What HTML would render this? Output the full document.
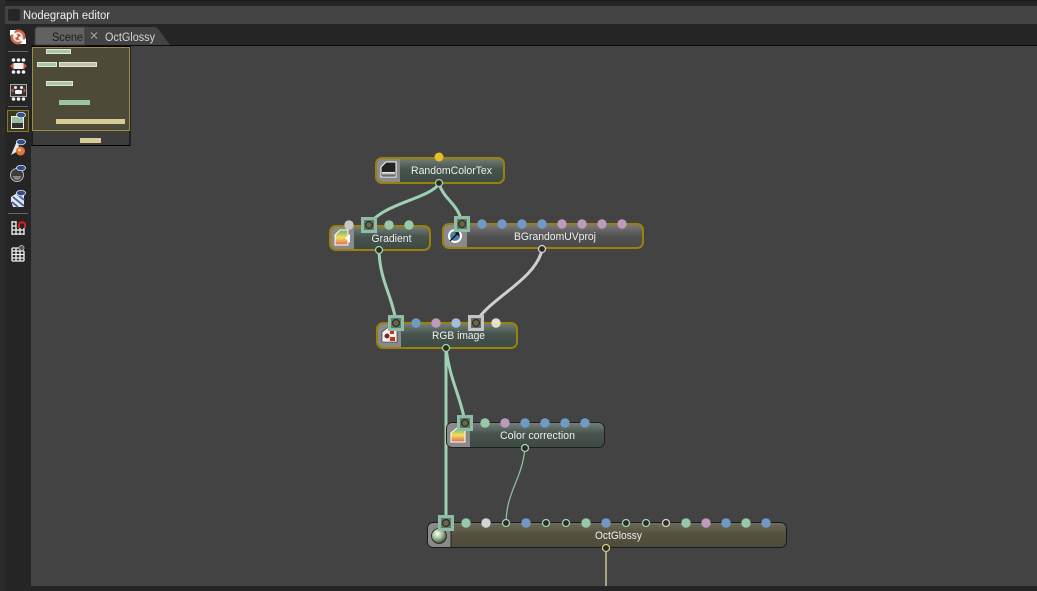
<!DOCTYPE html>
<html><head><meta charset="utf-8"><style>
html,body{margin:0;padding:0;background:#252525;width:1037px;height:591px;overflow:hidden}
svg{display:block}
text{font-family:"Liberation Sans",sans-serif;font-size:11px;fill:#eeeeee}
.t{text-anchor:middle}
</style></head><body>
<svg width="1037" height="591" viewBox="0 0 1037 591" xmlns="http://www.w3.org/2000/svg">
<defs>
<linearGradient id="g" x1="0" y1="0" x2="0" y2="1"><stop offset="0" stop-color="#75807a"/><stop offset=".45" stop-color="#47534d"/><stop offset="1" stop-color="#3d4a44"/></linearGradient>
<linearGradient id="n" x1="0" y1="0" x2="0" y2="1"><stop offset="0" stop-color="#7a7a7a"/><stop offset=".5" stop-color="#525252"/><stop offset="1" stop-color="#484848"/></linearGradient>
<linearGradient id="o" x1="0" y1="0" x2="0" y2="1"><stop offset="0" stop-color="#6e6c5c"/><stop offset=".45" stop-color="#54513f"/><stop offset="1" stop-color="#4e4b3b"/></linearGradient>
<linearGradient id="ic" x1="0" y1="0" x2="0" y2="1"><stop offset="0" stop-color="#fff"/><stop offset="1" stop-color="#555"/></linearGradient>
<linearGradient id="rb" x1="0" y1="0" x2="0" y2="1"><stop offset="0" stop-color="#6fae6a"/><stop offset=".5" stop-color="#f0e060"/><stop offset="1" stop-color="#e06a50"/></linearGradient>
<radialGradient id="sp" cx=".4" cy=".35" r=".7"><stop offset="0" stop-color="#fff"/><stop offset=".5" stop-color="#9dbb90"/><stop offset="1" stop-color="#2a3a2a"/></radialGradient>
</defs>

<!-- chrome -->
<rect width="1037" height="591" fill="#252525"/>
<rect x="0" y="0" width="1037" height="1" fill="#1a1a1a"/>
<rect x="5" y="6" width="1032" height="18" fill="#434343"/>
<rect x="0" y="0" width="5" height="591" fill="#2c2c2c"/>
<rect x="8" y="9" width="12" height="12" rx="2" fill="#262626"/>
<text x="23" y="19" textLength="87" lengthAdjust="spacingAndGlyphs" style="font-size:11.500px">Nodegraph editor</text>
<rect x="31" y="45" width="1006" height="1" fill="#0c0c0c"/>
<rect x="31" y="46" width="1006" height="540" fill="#434343"/>

<!-- tabs -->
<path d="M85 45V27H154Q157 27 159 30L170 45Z" fill="#434343"/>
<path d="M35 45V30Q35 27 38 27H85V45Z" fill="#626262" stroke="#3a3a3a"/>
<text x="52" y="41" textLength="31" lengthAdjust="spacingAndGlyphs" style="fill:#1c1c1c;font-size:11.500px">Scene</text>
<path d="M91 32.500L97 38.500M97 32.500L91 38.500" stroke="#a8a8a8" stroke-width="1"/>
<text x="105" y="41" textLength="50" lengthAdjust="spacingAndGlyphs" style="fill:#d5d5d5;font-size:11.500px">OctGlossy</text>

<!-- minimap -->
<rect x="32" y="46.500" width="98" height="99" fill="#3d3d3d" stroke="#000"/>
<rect x="32.500" y="47.500" width="97" height="83" fill="#4e4a3a" stroke="#9c8c48"/>
<g stroke="#e6e3d0" stroke-width="1">
<rect x="46.500" y="49.500" width="24" height="4" fill="#a4c8ac"/>
<rect x="37.500" y="62.500" width="19" height="4" fill="#a4c8ac"/>
<rect x="59.500" y="62.500" width="37" height="4" fill="#c4bfae"/>
<rect x="46.500" y="81.500" width="26" height="4" fill="#a4c8ac"/>
</g>
<rect x="59" y="100" width="31" height="5" fill="#9cc4a4"/>
<rect x="56" y="119" width="69" height="5" fill="#d8cd96"/>
<rect x="80" y="138" width="21" height="5" fill="#d8cd96"/>

<!-- sidebar -->
<g>
<circle cx="18" cy="37" r="7.500" fill="#c96a45"/><circle cx="18" cy="37" r="5" fill="#e8d8d0"/><circle cx="18" cy="37" r="3" fill="#c94a35"/>
<path d="M10 30l6 0-2 2 4 4-2 2-4-4-2 2zM26 44l-6 0 2-2-4-4 2-2 4 4 2-2z" fill="#fff"/>
<rect x="8" y="51" width="20" height="1" fill="#666"/>
<g fill="#f2f2f2"><circle cx="13.500" cy="60" r="1.800"/><circle cx="18.500" cy="60" r="1.800"/><circle cx="23.500" cy="60" r="1.800"/><circle cx="13.500" cy="72" r="1.800"/><circle cx="18.500" cy="72" r="1.800"/><circle cx="23.500" cy="72" r="1.800"/><rect x="13" y="63" width="11" height="6" rx="2"/></g>
<path d="M10 66l3.500-3.500v7zM27 66l-3.500-3.500v7z" fill="#d6503a"/>
<rect x="8" y="106" width="20" height="1" fill="#666"/>
<rect x="10.500" y="84.500" width="16" height="12" fill="#333" stroke="#aaa"/>
<g fill="#f2f2f2"><circle cx="15.500" cy="87.500" r="1.500"/><circle cx="21.500" cy="87.500" r="1.500"/><rect x="15" y="90" width="7" height="4" rx="1"/><circle cx="13.500" cy="99" r="1.800"/><circle cx="18.500" cy="99" r="1.800"/><circle cx="23.500" cy="99" r="1.800"/></g>
<path d="M11 90.500l2.500-2.500v5zM26 90.500l-2.500-2.500v5z" fill="#d6503a"/>
<rect x="7.500" y="110.500" width="21" height="21" fill="#3a3620" stroke="#8c7a20"/>
<rect x="11" y="116" width="13" height="13" fill="#eee"/><rect x="12" y="117" width="11" height="6" fill="#9cc0a0"/><rect x="12" y="123" width="11" height="5" fill="#333"/>
<ellipse cx="21" cy="115" rx="4.500" ry="2.800" fill="#2e4f8c" stroke="#fff" stroke-width=".7"/>
<path d="M11 155L17 141L20 150Z" fill="#dfe8ee"/><circle cx="20.500" cy="151" r="4.500" fill="#e8733a"/><circle cx="19.500" cy="150" r="1.500" fill="#ffd0a0"/>
<ellipse cx="21" cy="142" rx="4.500" ry="2.800" fill="#2e4f8c" stroke="#fff" stroke-width=".7"/>
<circle cx="17" cy="175" r="6.500" fill="#3c3c3c" stroke="#bbb"/><path d="M13 176a4 4 0 0 0 8 0z" fill="#888"/>
<ellipse cx="21" cy="168" rx="4.500" ry="2.800" fill="#2e4f8c" stroke="#fff" stroke-width=".7"/>
<path d="M11 201V197L17 193H24V207H13Z" fill="#e8e8e8"/><path d="M13 197L24 206M12 202L18 207M17 194L24 200" stroke="#4469b0" stroke-width="2"/>
<ellipse cx="21" cy="193" rx="4.500" ry="2.800" fill="#2e4f8c" stroke="#fff" stroke-width=".7"/>
<rect x="8" y="213" width="20" height="1" fill="#666"/>
<path d="M12 221V235M16 221V235M20 228V235M24 228V235M12 222H16M12 226H16M12 230H24M12 234H24" stroke="#f2f2f2" stroke-width="1.300" fill="none"/>
<path d="M19 228v-4a3.500 3.500 0 0 1 6 0v4" stroke="#d02020" stroke-width="2" fill="none"/>
<path d="M12 248V261M16 248V261M20 248V261M24 251V261M12 248H21M12 251H24M12 254.500H24M12 258H24M12 261H24" stroke="#f2f2f2" stroke-width="1.300" fill="none"/>
<circle cx="21.500" cy="248" r="2.500" fill="#555" stroke="#aaa"/>
</g>

<!-- wires -->
<g fill="none" stroke="#9ed0b4" stroke-width="3" stroke-linecap="round">
<path d="M439 184C428 199 385 203 369 224"/>
<path d="M439 184C445 201 459 204 462 224"/>
<path d="M379 251C380 281 392 295 396 322"/>
<path d="M446 349V522" />
<path d="M446 349C450 380 460 395 465 422"/>
</g>
<path d="M542 250C535 280 490 298 476 322" fill="none" stroke="#cfcfcf" stroke-width="3"/>
<path d="M525 448C522 480 507 490 506 522" fill="none" stroke="#8ac0a4" stroke-width="1.300"/>
<path d="M606 549V586" stroke="#cfc592" stroke-width="1.500"/>

<!-- RandomColorTex -->
<rect x="376" y="158" width="128" height="25" rx="6" fill="url(#g)" stroke="#9c800c" stroke-width="2"/>
<path d="M377 164a5 5 0 0 1 5-5H400V182H382a5 5 0 0 1-5-5Z" fill="#8a8a8a"/>
<path d="M381 177V167L386 162H396V177Z" fill="#222" stroke="#fff" stroke-width="1"/>
<path d="M382 172H395V176H382Z" fill="url(#ic)"/>
<circle cx="439" cy="157" r="4.500" fill="#e8bd28"/>
<text class="t" x="451.500" y="174" textLength="81" lengthAdjust="spacingAndGlyphs">RandomColorTex</text>

<!-- Gradient -->
<rect x="330" y="226" width="100" height="24" rx="6" fill="url(#g)" stroke="#9c800c" stroke-width="2"/>
<path d="M331 232a5 5 0 0 1 5-5H354V249H336a5 5 0 0 1-5-5Z" fill="#8a8a8a"/>
<path d="M335 245V235L340 230H348V245Z" fill="url(#rb)" stroke="#fff" stroke-width="1"/>
<path d="M345 238L350 234V243Z" fill="#fff"/>
<text class="t" x="391.500" y="242" textLength="40" lengthAdjust="spacingAndGlyphs">Gradient</text>

<!-- BGrandomUVproj -->
<rect x="443" y="224" width="200" height="24" rx="6" fill="url(#n)" stroke="#9c800c" stroke-width="2"/>
<path d="M444 230a5 5 0 0 1 5-5H467V247H449a5 5 0 0 1-5-5Z" fill="#8a8a8a"/>
<circle cx="455" cy="236" r="7" fill="#fff"/><circle cx="455" cy="236" r="5" fill="#4a7ea8"/><path d="M450 241L458 233M455.500 233h3v3" stroke="#111" stroke-width="1.400" fill="none"/>
<text class="t" x="555" y="240" textLength="82" lengthAdjust="spacingAndGlyphs">BGrandomUVproj</text>

<!-- RGB image -->
<rect x="377" y="323" width="140" height="25" rx="6" fill="url(#g)" stroke="#9c800c" stroke-width="2"/>
<path d="M378 329a5 5 0 0 1 5-5H401V347H383a5 5 0 0 1-5-5Z" fill="#8a8a8a"/>
<path d="M382 342V332L387 328H397V342Z" fill="#f2f2f2" stroke="#222" stroke-width=".6"/>
<circle cx="387" cy="336" r="2.500" fill="#7a2a18"/><rect x="390" y="331" width="4" height="3" fill="#c83018"/><rect x="390" y="337" width="5" height="4" fill="#c83018"/>
<text class="t" x="458.500" y="339" textLength="53" lengthAdjust="spacingAndGlyphs">RGB image</text>

<!-- Color correction -->
<rect x="446.500" y="422.500" width="158" height="25" rx="6" fill="url(#g)" stroke="#1f1f1f" stroke-width="1"/>
<path d="M447 428a5 5 0 0 1 5-5H470V447H452a5 5 0 0 1-5-5Z" fill="#8a8a8a"/>
<path d="M451 442V433L457 428H465V442Z" fill="url(#rb)" stroke="#fff" stroke-width="1"/>
<text class="t" x="537.500" y="439" textLength="75" lengthAdjust="spacingAndGlyphs">Color correction</text>

<!-- OctGlossy -->
<rect x="427.500" y="522.500" width="359" height="25" rx="6" fill="url(#o)" stroke="#1a1a1a" stroke-width="1"/>
<path d="M428 528a5 5 0 0 1 5-5H451V547H433a5 5 0 0 1-5-5Z" fill="#8a8a8a"/>
<path d="M451 523V547" stroke="#222"/>
<circle cx="439" cy="536" r="7.500" fill="url(#sp)" stroke="#222" stroke-width=".8"/>
<text class="t" x="618.500" y="539" textLength="47" lengthAdjust="spacingAndGlyphs">OctGlossy</text>

<!-- dots -->
<g fill="#c6c6c6"><circle cx="349" cy="225" r="4.700"/></g>
<g fill="#97c8a9"><circle cx="389" cy="225" r="4.700"/><circle cx="409" cy="225" r="4.700"/><circle cx="485" cy="423" r="4.700"/><circle cx="466" cy="523" r="4.700"/><circle cx="586" cy="523" r="4.700"/><circle cx="686" cy="523" r="4.700"/><circle cx="746" cy="523" r="4.700"/></g>
<g fill="#6f9ac6"><circle cx="482" cy="224" r="4.700"/><circle cx="502" cy="224" r="4.700"/><circle cx="522" cy="224" r="4.700"/><circle cx="542" cy="224" r="4.700"/><circle cx="416" cy="323" r="4.700"/><circle cx="525" cy="423" r="4.700"/><circle cx="545" cy="423" r="4.700"/><circle cx="565" cy="423" r="4.700"/><circle cx="585" cy="423" r="4.700"/><circle cx="526" cy="523" r="4.700"/><circle cx="606" cy="523" r="4.700"/><circle cx="726" cy="523" r="4.700"/><circle cx="766" cy="523" r="4.700"/></g>
<g fill="#c09abc"><circle cx="562" cy="224" r="4.700"/><circle cx="582" cy="224" r="4.700"/><circle cx="602" cy="224" r="4.700"/><circle cx="622" cy="224" r="4.700"/><circle cx="436" cy="323" r="4.700"/><circle cx="505" cy="423" r="4.700"/><circle cx="706" cy="523" r="4.700"/></g>
<circle cx="456" cy="323" r="4.700" fill="#a6bedc"/>
<circle cx="496" cy="323" r="4.700" fill="#e4e0cc"/>
<circle cx="486" cy="523" r="4.700" fill="#d6d6d6"/>

<!-- selection boxes -->
<g fill="#8fbca6">
<path fill-rule="evenodd" d="M361 217h16v16h-16zM364 220v10h10v-10z"/>
<path fill-rule="evenodd" d="M454 216h16v16h-16zM457 219v10h10v-10z"/>
<path fill-rule="evenodd" d="M388 315h16v16h-16zM391 318v10h10v-10z"/>
<path fill-rule="evenodd" d="M457 415h16v16h-16zM460 418v10h10v-10z"/>
<path fill-rule="evenodd" d="M438 515h16v16h-16zM441 518v10h10v-10z"/>
</g>
<path fill-rule="evenodd" d="M468 315h16v16h-16zM471 318v10h10v-10z" fill="#c4c4c4"/>
<g fill="#5f7a6c"><rect x="364" y="220" width="10" height="10"/><rect x="457" y="219" width="10" height="10"/><rect x="391" y="318" width="10" height="10"/><rect x="460" y="418" width="10" height="10"/><rect x="441" y="518" width="10" height="10"/></g>
<rect x="471" y="318" width="10" height="10" fill="#6a6a6a"/>

<!-- rings in boxes -->
<g fill="#6b6540" stroke="#2e2e2e" stroke-width="1.300">
<circle cx="369" cy="225" r="3.500"/><circle cx="462" cy="224" r="3.500"/><circle cx="396" cy="323" r="3.500"/><circle cx="465" cy="423" r="3.500"/><circle cx="446" cy="523" r="3.500"/><circle cx="476" cy="323" r="3.500"/>
</g>
<!-- rings -->
<g fill="#2e2a1c" stroke="#9ed0b4" stroke-width="1.300">
<circle cx="439" cy="183" r="3.500"/><circle cx="379" cy="250" r="3.500"/><circle cx="446" cy="348" r="3.500"/><circle cx="525" cy="448" r="3.500"/>
<circle cx="506" cy="523" r="3.500"/><circle cx="546" cy="523" r="3.500"/><circle cx="566" cy="523" r="3.500"/><circle cx="626" cy="523" r="3.500"/><circle cx="646" cy="523" r="3.500"/>
</g>
<g fill="#2e2a1c" stroke="#d4d4d4" stroke-width="1.300"><circle cx="542" cy="249" r="3.500"/><circle cx="666" cy="523" r="3.500"/></g>
<circle cx="606" cy="548" r="3.500" fill="#2e2a1c" stroke="#cfc592" stroke-width="1.300"/>
</svg>
</body></html>
